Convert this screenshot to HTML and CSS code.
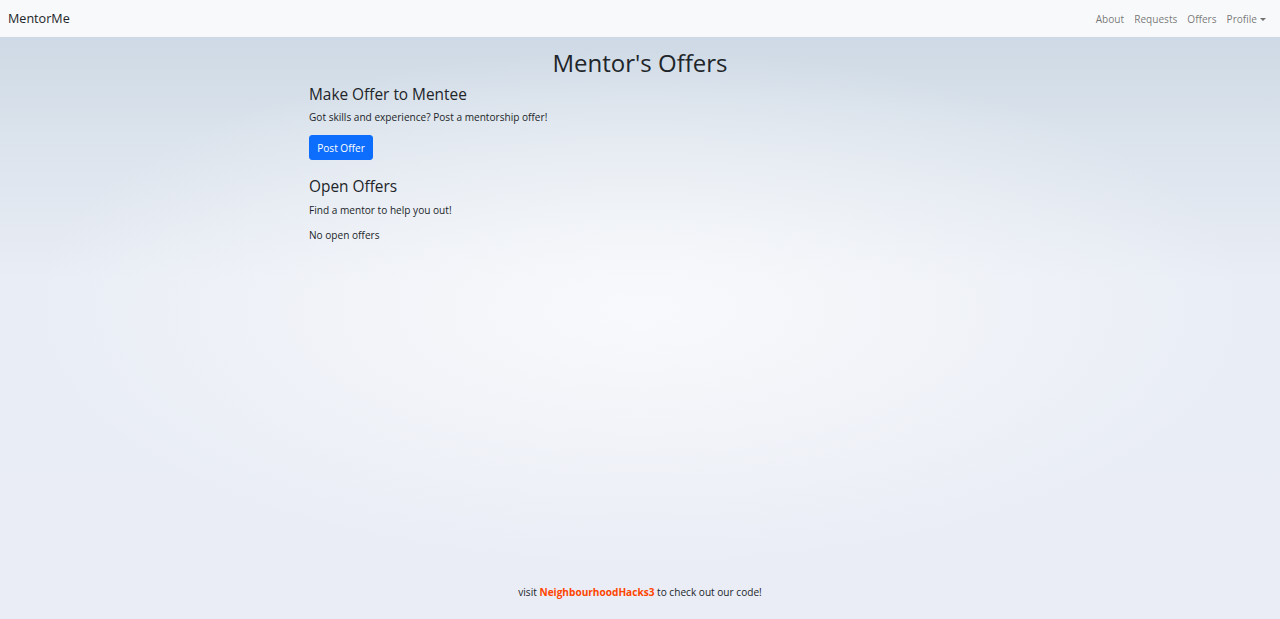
FILE: index.html
```html
<!DOCTYPE html>
<html lang="en">
<head>
    <meta charset="UTF-8">
    <meta name="viewport" content="width=device-width, initial-scale=1.0">
    <title>MentorMe - Offers</title>
    <link rel="stylesheet" href="styles.css">
</head>
<body>
    <nav class="navbar">
        <a class="brand" href="#">MentorMe</a>
        <ul class="nav-links">
            <li><a href="#">About</a></li>
            <li><a href="#">Requests</a></li>
            <li><a href="#">Offers</a></li>
            <li><a href="#" class="dropdown-toggle">Profile</a></li>
        </ul>
    </nav>

    <main class="page">
        <h1 class="page-title">Mentor's Offers</h1>

        <section class="block">
            <h3>Make Offer to Mentee</h3>
            <p>Got skills and experience? Post a mentorship offer!</p>
            <button class="btn-primary">Post Offer</button>
        </section>

        <section class="block">
            <h3>Open Offers</h3>
            <p>Find a mentor to help you out!</p>
            <p>No open offers</p>
        </section>
    </main>

    <footer class="footer">
        visit <a href="#">NeighbourhoodHacks3</a> to check out our code!
    </footer>
</body>
</html>
```

FILE: styles.css
```css
* {
    box-sizing: border-box;
}
html, body {
    height: 100%;
}
body {
    margin: 0;
    font-family: "Open Sans", "Noto Sans", Arial, sans-serif;
    font-size: 10.1px;
    color: #212529;
    display: flex;
    flex-direction: column;
    background:
        radial-gradient(ellipse 48% 42% at 50% 50%, rgba(249, 250, 252, 0.95) 0%, rgba(249, 250, 252, 0) 100%),
        linear-gradient(to bottom, #c9d6e3 0%, #dbe3ec 22%, #e9edf5 45%, #eaedf6 100%);
    background-color: #eaedf6;
}
a {
    text-decoration: none;
}
.navbar {
    height: 37px;
    flex-shrink: 0;
    background: #f8f9fa;
    display: flex;
    align-items: center;
    justify-content: space-between;
    padding: 0 8px;
}
.brand {
    color: #212529;
    font-size: 12.6px;
}
.nav-links {
    list-style: none;
    margin: 0 6px 0 0;
    padding: 0;
    display: flex;
    gap: 10px;
}
.nav-links a {
    color: rgba(0, 0, 0, 0.55);
    font-size: 10.1px;
}
.dropdown-toggle::after {
    content: "";
    display: inline-block;
    margin-left: 3px;
    vertical-align: 2px;
    border-top: 3px solid;
    border-left: 3px solid transparent;
    border-right: 3px solid transparent;
}
.page {
    width: 662px;
    margin: 0 auto;
    flex: 1;
}
.page-title {
    text-align: center;
    font-weight: 400;
    font-size: 24px;
    margin: 12px 0 8px;
    line-height: 1.2;
}
.block h3 {
    font-weight: 400;
    font-size: 15.4px;
    margin: 0 0 6px;
    line-height: 1.2;
}
.block p {
    margin: 0 0 10px;
    line-height: 1.5;
}
.block {
    margin-bottom: 18px;
}
.btn-primary {
    font-family: inherit;
    font-size: 10.1px;
    white-space: nowrap;
    color: #fff;
    background: #0d6efd;
    border: 1px solid #0d6efd;
    border-radius: 3px;
    padding: 0;
    width: 64px;
    height: 25px;
    cursor: pointer;
}
.footer {
    text-align: center;
    padding: 0 0 20px;
    font-size: 10.1px;
}
.footer a {
    color: #ff4500;
    font-weight: 700;
}
```
